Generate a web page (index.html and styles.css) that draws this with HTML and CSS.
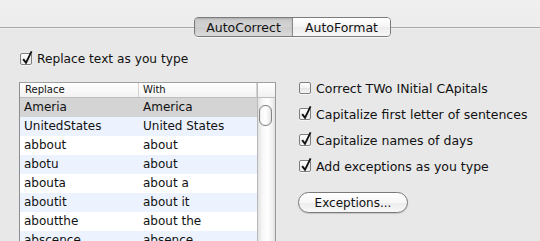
FILE: index.html
```html
<!DOCTYPE html>
<html>
<head>
<meta charset="utf-8">
<link rel="stylesheet" href="styles.css">
</head>
<body>
<div class="window">
  <div class="toolbar">
    <div class="seg">
      <div class="tab active">AutoCorrect</div>
      <div class="tab">AutoFormat</div>
    </div>
  </div>
  <div class="content">
    <div class="left">
      <div class="check">
        <span class="box"><svg class="tick" viewBox="0 0 14 14" width="14" height="14"><path d="M3.2 7.2 L6 10.8 L11.6 -0.6" /></svg></span>
        <span class="label">Replace text as you type</span>
      </div>
      <div class="table">
        <div class="grid">
          <div class="thead"><div class="th">Replace</div><div class="th last">With</div></div>
          <div class="row sel"><div class="cell">Ameria</div><div class="cell">America</div></div>
          <div class="row alt"><div class="cell">UnitedStates</div><div class="cell">United States</div></div>
          <div class="row"><div class="cell">abbout</div><div class="cell">about</div></div>
          <div class="row alt"><div class="cell">abotu</div><div class="cell">about</div></div>
          <div class="row"><div class="cell">abouta</div><div class="cell">about a</div></div>
          <div class="row alt"><div class="cell">aboutit</div><div class="cell">about it</div></div>
          <div class="row"><div class="cell">aboutthe</div><div class="cell">about the</div></div>
          <div class="row alt"><div class="cell">abscence</div><div class="cell">absence</div></div>
        </div>
        <div class="scroll">
          <div class="corner"></div>
          <div class="track"><div class="thumb"></div></div>
        </div>
      </div>
    </div>
    <div class="right">
      <div class="check opt">
        <span class="box"></span>
        <span class="label">Correct TWo INitial CApitals</span>
      </div>
      <div class="check opt">
        <span class="box"><svg class="tick" viewBox="0 0 14 14" width="14" height="14"><path d="M3.2 7.2 L6 10.8 L11.6 -0.6" /></svg></span>
        <span class="label">Capitalize first letter of sentences</span>
      </div>
      <div class="check opt">
        <span class="box"><svg class="tick" viewBox="0 0 14 14" width="14" height="14"><path d="M3.2 7.2 L6 10.8 L11.6 -0.6" /></svg></span>
        <span class="label">Capitalize names of days</span>
      </div>
      <div class="check opt">
        <span class="box"><svg class="tick" viewBox="0 0 14 14" width="14" height="14"><path d="M3.2 7.2 L6 10.8 L11.6 -0.6" /></svg></span>
        <span class="label">Add exceptions as you type</span>
      </div>
      <div class="btn">Exceptions...</div>
    </div>
  </div>
</div>
</body>
</html>
```
FILE: styles.css
```css
html, body {
  margin: 0;
  padding: 0;
}
body {
  width: 540px;
  height: 241px;
  overflow: hidden;
  background: #e8e8e8;
  font-family: "DejaVu Sans", "Liberation Sans", sans-serif;
  font-size: 12px;
  color: #111;
}
.window {
  width: 540px;
  height: 241px;
  overflow: hidden;
}
.toolbar {
  height: 40px;
  box-sizing: border-box;
  padding-top: 17px;
  padding-left: 194px;
  background: linear-gradient(to bottom, #f0f0f0 0, #ededed 27px, #a9a9a9 27px, #a9a9a9 28px, #f6f6f6 28px, #e8e8e8 29px, #e8e8e8 100%);
}
.seg {
  display: flex;
  width: 197px;
  height: 20px;
  box-sizing: border-box;
  border: 1px solid #7b7b7b;
  border-radius: 4px;
  overflow: hidden;
  box-shadow: 0 1px 0 rgba(255,255,255,0.7);
}
.tab {
  flex: 1;
  display: flex;
  align-items: center;
  justify-content: center;
  font-size: 12.5px;
  background: linear-gradient(to bottom, #ffffff, #f4f4f4 50%, #ececec 51%, #f7f7f7);
}
.tab.active {
  background: linear-gradient(to bottom, #c9c9c9, #d4d4d4 50%, #cbcbcb 51%, #dadada);
  border-right: 1px solid #8a8a8a;
  box-shadow: inset 0 1px 2px rgba(0,0,0,0.15);
}
.content {
  display: flex;
  padding-left: 19px;
  gap: 22px;
}
.left {
  width: 257px;
  display: flex;
  flex-direction: column;
}
.check {
  display: flex;
  align-items: center;
  height: 16px;
  margin-top: 11px;
  gap: 5px;
}
.box {
  position: relative;
  width: 12px;
  height: 12px;
  box-sizing: border-box;
  margin-left: 1px;
  border: 1px solid #7f7f7f;
  border-radius: 2px;
  background: linear-gradient(to bottom, #ffffff, #f2f2f2 50%, #e4e4e4 51%, #f4f4f4);
  box-shadow: 0 1px 0 rgba(255,255,255,0.6);
  flex: none;
}
.tick {
  position: absolute;
  left: -1px;
  top: -2px;
  overflow: visible;
}
.tick path {
  fill: none;
  stroke: #111;
  stroke-width: 1.9;
  stroke-linejoin: miter;
  stroke-linecap: butt;
}
.label {
  white-space: nowrap;
  font-size: 12.2px;
}
.opt .label {
  font-size: 12.5px;
}
.table {
  margin-top: 15px;
  display: flex;
  border-left: 1px solid #8e8e8e;
  border-right: 1px solid #9a9a9a;
  border-top: 1px solid #a0a0a0;
  height: 200px;
  background: #fff;
}
.grid {
  width: 237px;
  display: flex;
  flex-direction: column;
}
.thead {
  display: grid;
  grid-template-columns: 119px 118px;
  height: 14px;
  border-bottom: 1px solid #bdbdbd;
  background: linear-gradient(to bottom, #ffffff, #f3f3f3);
}
.th {
  font-size: 10px;
  line-height: 14px;
  padding-left: 5px;
  border-right: 1px solid #d3d3d3;
  color: #111;
}
.th.last {
  padding-left: 4px;
}
.row {
  display: grid;
  grid-template-columns: 119px 118px;
  height: 19px;
  line-height: 19px;
  background: #ffffff;
}
.row.alt {
  background: #edf3fe;
}
.row.sel {
  background: #d4d4d4;
}
.cell {
  padding-left: 4px;
  font-size: 12px;
  white-space: nowrap;
}
.scroll {
  width: 17px;
  display: flex;
  flex-direction: column;
  border-left: 1px solid #b8b8b8;
}
.corner {
  height: 14px;
  border-bottom: 1px solid #bdbdbd;
  background: linear-gradient(to bottom, #ffffff, #f1f1f1);
}
.track {
  flex: 1;
  background: linear-gradient(to right, #e2e2e2, #f6f6f6 25%, #ffffff 55%, #f0f0f0 85%, #dddddd);
  padding-top: 7px;
  padding-left: 1px;
}
.thumb {
  width: 13px;
  height: 21px;
  box-sizing: border-box;
  border: 1px solid #858585;
  border-radius: 6px;
  background: linear-gradient(to right, #f4f4f4, #ffffff 50%, #e6e6e6);
  box-shadow: inset 0 0 1px rgba(0,0,0,0.2);
}
.right {
  display: flex;
  flex-direction: column;
  padding-top: 35px;
}
.check.opt {
  margin-top: 0;
  height: 26px;
}
.btn {
  margin-top: 13px;
  width: 110px;
  height: 21px;
  box-sizing: border-box;
  border: 1px solid #7a7a7a;
  border-radius: 11px;
  display: flex;
  align-items: center;
  justify-content: center;
  font-size: 12px;
  background: linear-gradient(to bottom, #ffffff, #f7f7f7 50%, #ececec 51%, #f8f8f8);
  box-shadow: 0 1px 1px rgba(0,0,0,0.15);
}
```
